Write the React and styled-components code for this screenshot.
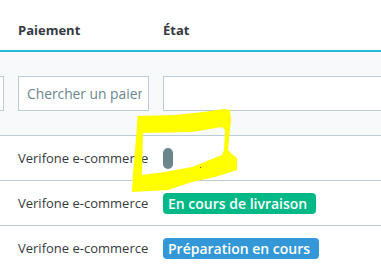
import React from 'react'
import styled, { createGlobalStyle } from 'styled-components'

const Global = createGlobalStyle`
    html, body {
        margin: 0;
        padding: 0;
        background: #fff;
    }
    body {
        font-family: 'Open Sans', 'Liberation Sans', sans-serif;
        color: #363a41;
    }
`

const Frame = styled.div`
    position: relative;
    width: 381px;
    height: 270px;
    overflow: hidden;
`

const Table = styled.div`
    display: grid;
    grid-template-columns: 111px 145px 320px;
    margin-left: -100px;
`

const HeadCell = styled.div`
    height: 52px;
    padding: 0 7px 11px;
    box-sizing: border-box;
    display: flex;
    align-items: flex-end;
    font-size: 13px;
    font-weight: 700;
    line-height: 18px;
    color: #363a41;
    border-bottom: 2px solid #25b9d7;
`

const FilterCell = styled.div`
    background: #f8f9fb;
    padding: 24px 7px;
    border-bottom: 1px solid #bbcdd2;
`

const Input = styled.input`
    display: block;
    width: 100%;
    height: 35px;
    box-sizing: border-box;
    border: 1px solid #bbcdd2;
    background: #fff;
    padding: 0 6px 0 8px;
    font-family: 'Open Sans', 'Liberation Sans', sans-serif;
    font-size: 13.8px;
    color: #363a41;
    outline: none;
    &::placeholder {
        color: #6c868e;
    }
`

const Cell = styled.div`
    height: 44px;
    padding: 0 7px;
    display: flex;
    align-items: center;
    font-size: 13px;
    color: #363a41;
    white-space: nowrap;
    border-bottom: ${props => (props.last ? 'none' : '1px solid #bbcdd2')};
`

const Badge = styled.span`
    display: inline-block;
    min-width: 10px;
    height: 21px;
    box-sizing: border-box;
    padding: 0 9px 0 5px;
    border-radius: 4px;
    background: ${props => props.color};
    color: #fff;
    font-size: 14px;
    font-weight: 600;
    line-height: 21px;
    &:empty {
        padding: 0;
        width: 10px;
        border-radius: 5px;
    }
`

const Mark = styled.svg`
    position: absolute;
    left: 0;
    top: 0;
    pointer-events: none;
`

const rows = [
    { pay: 'Verifone e-commerce', state: '', color: '#6c868e' },
    { pay: 'Verifone e-commerce', state: 'En cours de livraison', color: '#01b887' },
    { pay: 'Verifone e-commerce', state: 'Préparation en cours', color: '#3498d8' },
]

export default function App() {
    return (
        <Frame>
            <Global />
            <Table>
                <HeadCell />
                <HeadCell>Paiement</HeadCell>
                <HeadCell>État</HeadCell>

                <FilterCell><Input /></FilterCell>
                <FilterCell><Input placeholder="Chercher un paiement" /></FilterCell>
                <FilterCell><Input /></FilterCell>

                {rows.map((r, i) => (
                    <React.Fragment key={i}>
                        <Cell last={i === rows.length - 1} />
                        <Cell last={i === rows.length - 1}>{r.pay}</Cell>
                        <Cell last={i === rows.length - 1}>
                            <Badge color={r.color}>{r.state}</Badge>
                        </Cell>
                    </React.Fragment>
                ))}
            </Table>
            {/* hand-drawn highlight over the empty state badge */}
            <Mark width="381" height="270" viewBox="0 0 381 270">
                <path
                    fillRule="evenodd"
                    fill="#ffff00"
                    d="M137.5 116 L175 115 L203 112 L225 109 L230 110 L231 120 L228 150 L233 155 L237 158 L237 170 L215 177 L192 182 L168 190 L132 192 L133 173 L136.5 133 Z
                       M143 133 L192 132 L222 127 L225 130 L224 150 L222 155 L192 167 L165 172 L142 175 Z"
                />
                <rect x="200" y="167" width="1" height="1" fill="#e0201a" />
            </Mark>
        </Frame>
    )
}
